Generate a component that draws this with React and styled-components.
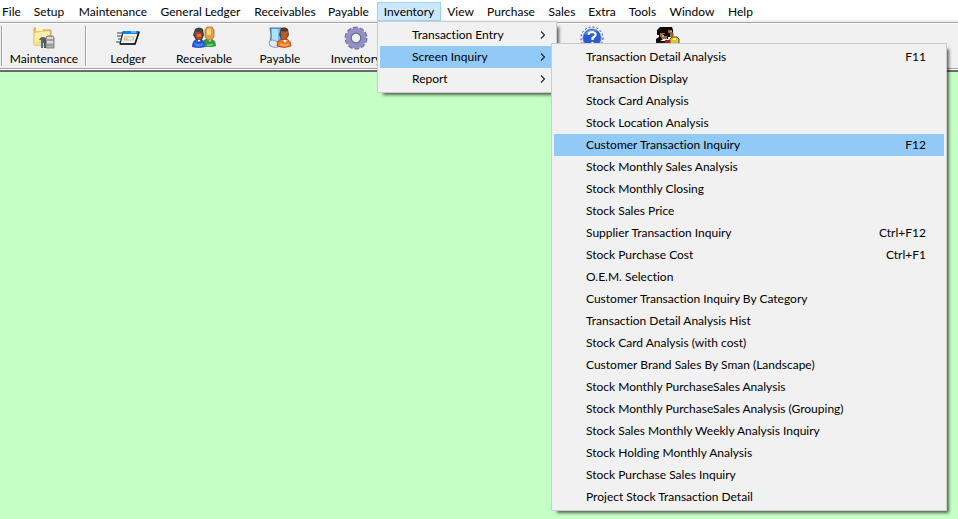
import React from "react";
import styled, { createGlobalStyle, css } from "styled-components";

const Global = createGlobalStyle`
  * { box-sizing: border-box; }
  body { margin: 0; background: #c6ffc6; }
  button { font: inherit; color: inherit; }
`;

const Page = styled.div`
  min-height: 100vh;
  display: flex;
  flex-direction: column;
  overflow: hidden;
  color: #000;
  font: 12px/16px Lato, "Open Sans", sans-serif;

  &, button { font-variant-ligatures: none; }
`;

const MenuBar = styled.nav`
  display: grid;
  grid-template-columns: 23px 52px 76px 99px 70px 57px 64px 39px 62px 40px 40px 41px 58px 39px;
  height: 20px;
  padding-top: 2px;
  background: #fff;
`;

const MenuSlot = styled.div`
  position: relative;
`;

const MenuButton = styled.button`
  display: flex;
  align-items: center;
  justify-content: center;
  width: 100%;
  height: 19px;
  padding: 0;
  white-space: nowrap;
  border: 1px solid transparent;
  background: transparent;
  ${(p) => p.$open && css`
    border-color: #99d1ff;
    background: #cce8ff;
  `}
`;

const Popup = styled.div`
  position: absolute;
  z-index: 2;
  padding: 2px;
  border: 1px solid #ccc;
  background: #f1f1f1;
  box-shadow: 4px 4px 3px -2px rgba(0, 0, 0, 0.6);
`;

const Dropdown = styled(Popup)`
  top: 19px;
  left: 0;
  width: 180px;
`;

const Submenu = styled(Popup)`
  top: -3px;
  left: 171px;
  width: 396px;
`;

const Row = styled.div`
  position: relative;
`;

const Command = styled.button`
  display: flex;
  align-items: center;
  justify-content: space-between;
  width: 100%;
  height: 22px;
  padding: 0 18px 0 32px;
  border: 0;
  text-align: left;
  white-space: nowrap;
  background: ${(p) => (p.$active ? "#91c9f7" : "transparent")};
`;

const ParentCommand = styled(Command)`
  padding-right: 8px;
`;

const Toolbar = styled.div`
  display: flex;
  align-items: center;
  height: 52px;
  padding-left: 1px;
  border-top: 2px solid #f0f0f0;
  border-bottom: 2px solid #696969;
  background: #f0f0f0;
  box-shadow: inset 0 1px #a0a0a0, inset 0 2px #fff, inset 0 -1px #fff, inset 0 -2px #a0a0a0;
`;

const Divider = styled.span`
  width: 2px;
  height: 40px;
  border-left: 1px solid #a0a0a0;
  border-right: 1px solid #fff;
  margin-right: ${(p) => p.$gap || 0}px;
`;

const Tool = styled.button`
  display: flex;
  flex-direction: column;
  align-items: center;
  justify-content: flex-start;
  gap: 1px;
  width: ${(p) => (p.$wide ? 82 : 76)}px;
  height: 40px;
  padding: 0;
  border: 0;
  background: transparent;
  svg { display: block; width: 24px; height: 24px; flex: none; }
`;

const Spare = styled.span`
  width: 160px;
`;

const Workspace = styled.main`
  flex: 1;
  background: #c6ffc6;
`;

const Chevron = () => (
  <svg width="7" height="10" viewBox="0 0 7 10" fill="none" stroke="#222" strokeWidth="1.1" aria-hidden="true">
    <path d="M2 1.5 5.5 5 2 8.5" />
  </svg>
);

const FolderIcon = () => (
  <svg viewBox="0 0 24 24" aria-hidden="true">
    <path d="M2 2h7l2 2h8v15H2z" fill="#f0c758" stroke="#c49a42" strokeWidth=".8" />
    <path d="M4 1h6l1 4H4z" fill="#fff6cf" />
    <path d="M2 7 18 5v14H2z" fill="#fbdc78" />
    <path d="M3 7 17 5v5L3 17z" fill="#fff0ad" />
    <path d="M8 12q3-2 6 0h3v2h-4v3H9v-3H7z" fill="#5a6468" />
    <path d="M9 15h2v7H9z" fill="#2878b0" />
    <path d="M12 14h2v8h-2z" fill="#69453a" />
    <path d="M15 10h6l1 2v10h-8V12z" fill="#b5b5b5" stroke="#6c6c6c" strokeWidth=".8" />
    <path d="M15 12h6M15 16h6" stroke="#e8e8e8" strokeWidth="1.5" />
    <path d="M15 14h7M15 19h7" stroke="#858585" />
  </svg>
);

const LedgerIcon = () => (
  <svg viewBox="0 0 24 24" aria-hidden="true">
    <path d="M7 6h16l-4 12H4z" fill="#f4f0da" stroke="#1a2635" strokeWidth="1.2" />
    <path d="M7 5h16l-1 3H6z" fill="#1781e5" />
    <path d="M15 5h5v2h-5z" fill="#65b8ff" />
    <path d="M9 11h9l-1 3H8z" fill="#fff" stroke="#b5b5ae" />
    <path d="M9 13h3" stroke="#c9a86e" />
    <path d="M1 7h6M1 10h5M2 13h4M0 16h5" stroke="#334152" strokeWidth="1.2" />
    <path d="M4 18h15l4-12" fill="none" stroke="#101820" strokeWidth="1.5" />
  </svg>
);

const PeopleIcon = () => (
  <svg viewBox="0 0 24 24" aria-hidden="true">
    <path d="M10 20q0-6 4-7h6q4 2 4 7l-4 1h-9z" fill="#31983b" />
    <path d="m16 13 2 3 2-3z" fill="#fff" />
    <path d="M15 1h5l2 3v7l-3 3h-3l-3-3V4z" fill="#dba04a" stroke="#a9712b" strokeWidth=".8" />
    <path d="M15 3q3-2 4 1v5h-4z" fill="#ffd07b" />
    <path d="M0 21q0-7 5-8h4q5 2 4 8-6 2-13 0" fill="#2459d1" />
    <path d="m5 13 2 3 2-3z" fill="#fff" />
    <path d="M3 3q4-3 8 0l1 6-2 5H4L1 9z" fill="#44403f" />
    <path d="M3 6q5-1 7 2 0 6-3 6T3 6" fill="#a94820" />
    <path d="M5 8h4v3H5z" fill="#dc7038" />
    <path d="M3 18q4 3 8 0" fill="none" stroke="#5f84ed" strokeWidth="2" />
    <path d="M15 19q3 1 6-1" fill="none" stroke="#68d063" strokeWidth="2" />
  </svg>
);

const PayableIcon = () => (
  <svg viewBox="0 0 24 24" aria-hidden="true">
    <path d="M2 2h11v14H2q2-6 0-14" fill="#65bcf4" stroke="#4d718a" />
    <path d="M4 3h6v12H4z" fill="#aae3ff" />
    <path d="M1 16q3-4 8 0l4 4q-6 3-11 0z" fill="#e3e8f5" stroke="#8c99b2" />
    <path d="M9 20q0-6 5-7h5q4 2 4 7-7 3-14 0" fill="#ec7424" stroke="#a9421d" strokeWidth=".8" />
    <path d="m15 14 2 3 2-3z" fill="#fff" />
    <path d="M13 2q4-2 7 1l1 6-3 5h-4l-3-5z" fill="#59382c" />
    <path d="M13 5q4 1 7 0 0 9-4 9T13 5" fill="#b65c2b" />
    <path d="M12 18q5 3 9 0" fill="none" stroke="#ffae4e" strokeWidth="2" />
  </svg>
);

const GearIcon = () => (
  <svg viewBox="0 0 24 24" aria-hidden="true">
    <circle cx="12" cy="12" r="9.5" fill="none" stroke="#77779f" strokeWidth="4" strokeDasharray="4.3 1.669" />
    <circle cx="12" cy="12" r="7.5" fill="none" stroke="#9292c8" strokeWidth="5.5" />
    <circle cx="12" cy="12" r="4.8" fill="#f0f0f0" stroke="#666682" strokeWidth="1.2" />
  </svg>
);

const HelpIcon = () => (
  <svg viewBox="0 0 24 24" aria-hidden="true">
    <circle cx="12" cy="12" r="11" fill="#fff" stroke="#20345a" strokeDasharray="2 2" />
    <circle cx="12" cy="12" r="9.5" fill="#285dcb" stroke="#adc6f5" />
    <path d="M4 9q4-8 14-4-5 0-14 4z" fill="#5d92e5" />
    <path d="M8.5 9q0-3 4-3 4 1 3 3-1 2-3 3v2" fill="none" stroke="#fff" strokeWidth="2.2" />
    <circle cx="12.5" cy="17" r="1.3" fill="#fff" />
  </svg>
);

const ExitIcon = () => (
  <svg viewBox="0 0 24 24" aria-hidden="true">
    <path d="M4 1h12l1 3v7h-5v2H7l-4 3H0v-3l3-2V9H1V4z" fill="#0b0806" />
    <path d="M4 7h5v1H7v2h4v3H6l-2-3z" fill="#9b6b42" />
    <path d="M12 4h4v2l2 2-1 3h-3V7h-2z" fill="#9c6538" />
    <path d="M14 5h2v1h-2zM6 9h2v2H6z" fill="#dfaa72" />
    <path d="M0 15h10v8H0z" fill="#191919" />
    <path d="M9 14h5v9H9z" fill="#b01825" />
    <path d="M16 11h5l2 2v5l-2 2h-4l-3-3v-4z" fill="#d9c62a" stroke="#584e12" />
    <path d="M17 12h3v2h-3z" fill="#fff48b" />
  </svg>
);

const menus = ["File", "Setup", "Maintenance", "General Ledger", "Receivables", "Payable", "Inventory", "View", "Purchase", "Sales", "Extra", "Tools", "Window", "Help"];

const inquiries = [
  ["Transaction Detail Analysis", "F11"],
  ["Transaction Display"],
  ["Stock Card Analysis"],
  ["Stock Location Analysis"],
  ["Customer Transaction Inquiry", "F12"],
  ["Stock Monthly Sales Analysis"],
  ["Stock Monthly Closing"],
  ["Stock Sales Price"],
  ["Supplier Transaction Inquiry", "Ctrl+F12"],
  ["Stock Purchase Cost", "Ctrl+F1"],
  ["O.E.M. Selection"],
  ["Customer Transaction Inquiry By Category"],
  ["Transaction Detail Analysis Hist"],
  ["Stock Card Analysis (with cost)"],
  ["Customer Brand Sales By Sman (Landscape)"],
  ["Stock Monthly PurchaseSales Analysis"],
  ["Stock Monthly PurchaseSales Analysis (Grouping)"],
  ["Stock Sales Monthly Weekly Analysis Inquiry"],
  ["Stock Holding Monthly Analysis"],
  ["Stock Purchase Sales Inquiry"],
  ["Project Stock Transaction Detail"],
];

const tools = [
  ["Ledger", LedgerIcon],
  ["Receivable", PeopleIcon],
  ["Payable", PayableIcon],
  ["Inventory", GearIcon],
];

function InquiryMenu() {
  return (
    <Submenu role="menu" aria-label="Screen Inquiry">
      {inquiries.map(([name, keys]) => (
        <Command key={name} role="menuitem" $active={name === "Customer Transaction Inquiry"}>
          <span>{name}</span>
          {keys && <span>{keys}</span>}
        </Command>
      ))}
    </Submenu>
  );
}

function InventoryMenu() {
  return (
    <Dropdown role="menu" aria-label="Inventory">
      {["Transaction Entry", "Screen Inquiry", "Report"].map((name) => {
        const open = name === "Screen Inquiry";
        return (
          <Row key={name}>
            <ParentCommand role="menuitem" aria-haspopup="menu" aria-expanded={open} $active={open}>
              <span>{name}</span>
              <Chevron />
            </ParentCommand>
            {open && <InquiryMenu />}
          </Row>
        );
      })}
    </Dropdown>
  );
}

export default function App() {
  return (
    <Page>
      <Global />
      <MenuBar>
        {menus.map((name) => {
          const open = name === "Inventory";
          return (
            <MenuSlot key={name}>
              <MenuButton $open={open} aria-expanded={open}>{name}</MenuButton>
              {open && <InventoryMenu />}
            </MenuSlot>
          );
        })}
      </MenuBar>
      <Toolbar role="toolbar">
        <Divider />
        <Tool $wide><FolderIcon />Maintenance</Tool>
        <Divider $gap={3} />
        {tools.map(([name, Icon]) => (
          <Tool key={name}><Icon />{name}</Tool>
        ))}
        <Spare />
        <Tool aria-label="Help"><HelpIcon /></Tool>
        <Tool aria-label="Exit"><ExitIcon /></Tool>
      </Toolbar>
      <Workspace />
    </Page>
  );
}
